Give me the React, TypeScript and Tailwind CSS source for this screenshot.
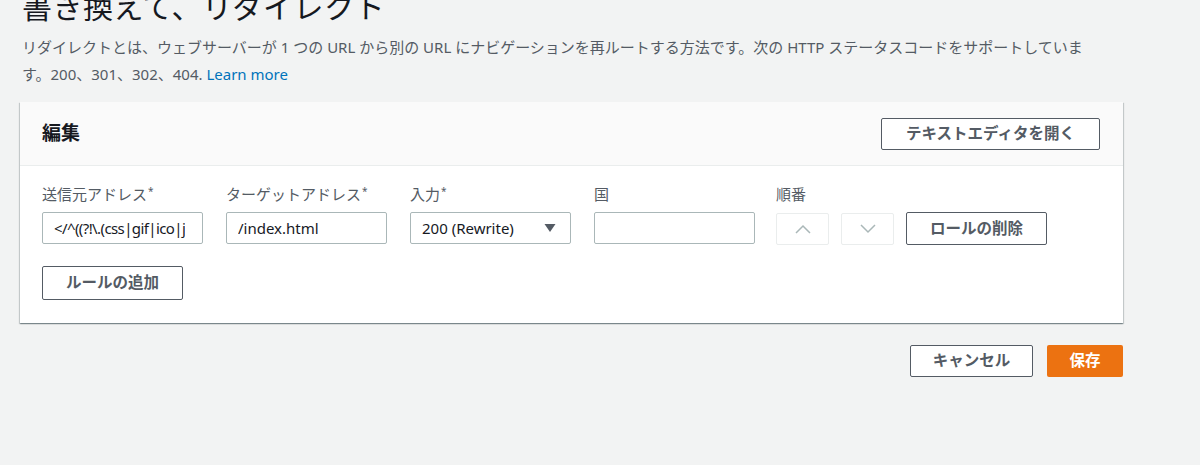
import React from "react";

const font = { fontFamily: '"Noto Sans", "Noto Sans CJK JP", sans-serif' };

function Label({ text, req }: { text: string; req?: boolean }) {
  return (
    <div className="h-[20px] text-[15px] leading-[20px] text-[#545b64] mb-[8px] whitespace-nowrap">
      {text}
      {req && <span className="text-[10px] align-top relative top-[-3px] ml-[1px]">*</span>}
    </div>
  );
}

function Input({ value, tight }: { value?: string; tight?: boolean }) {
  return (
    <div
      className={
        tight
          ? "w-[161px] h-[32px] border border-[#aab7b8] rounded-[2px] bg-white px-[11px] flex items-center text-[15px] tracking-[-0.6px] text-[#16191f] overflow-hidden whitespace-nowrap"
          : "w-[161px] h-[32px] border border-[#aab7b8] rounded-[2px] bg-white px-[11px] flex items-center text-[15px] text-[#16191f] overflow-hidden whitespace-nowrap"
      }
    >
      <span className="overflow-hidden">{value}</span>
    </div>
  );
}

export default function App() {
  return (
    <div className="min-h-[465px] w-[1200px] bg-[#f2f3f3] overflow-hidden" style={font}>
      <div className="pl-[22px]">
        <h1 className="text-[30px] leading-[36px] text-[#16191f] font-normal mt-[-11px] tracking-[0.5px]">
          書き換えて、リダイレクト
        </h1>
        <p className="mt-[9px] text-[15px] leading-[27px] text-[#545b64] whitespace-nowrap">
          リダイレクトとは、ウェブサーバーが 1 つの URL から別の URL にナビゲーションを再ルートする方法です。次の HTTP ステータスコードをサポートしていま
          <br />
          す。200、301、302、404. <span className="text-[#0073bb]">Learn more</span>
        </p>
      </div>

      <div className="ml-[20px] mt-[14px] w-[1103px] bg-white shadow-[0_1px_1px_0_rgba(0,28,36,0.3),1px_1px_1px_0_rgba(0,28,36,0.15),-1px_1px_1px_0_rgba(0,28,36,0.15)]">
        <div className="h-[64px] bg-[#fafafa] border-b border-[#eaeded] flex items-center justify-between pl-[22px] pr-[23px]">
          <div className="text-[19px] font-bold text-[#16191f]">編集</div>
          <button className="w-[219px] h-[32px] border border-[#545b64] rounded-[2px] bg-white text-[15.5px] font-bold text-[#545b64]">
            テキストエディタを開く
          </button>
        </div>
        <div className="pl-[22px] pt-[18px] pb-[23px]">
          <div className="flex">
            <div>
              <Label text="送信元アドレス" req />
              <Input value="</^((?!\.(css|gif|ico|j" tight />
            </div>
            <div className="ml-[23px]">
              <Label text="ターゲットアドレス" req />
              <Input value="/index.html" />
            </div>
            <div className="ml-[23px]">
              <Label text="入力" req />
              <div className="w-[161px] h-[32px] border border-[#aab7b8] rounded-[2px] bg-white pl-[11px] pr-[14px] flex items-center justify-between text-[15px] text-[#16191f]">
                <span>200 (Rewrite)</span>
                <svg width="12" height="10" viewBox="0 0 12 10">
                  <path d="M0.5 1 L11.5 1 L6 9 Z" fill="#545b64" />
                </svg>
              </div>
            </div>
            <div className="ml-[23px]">
              <Label text="国" />
              <Input />
            </div>
            <div className="ml-[21px]">
              <Label text="順番" />
              <div className="flex gap-[12px] items-center">
                <div className="w-[53px] h-[32px] border border-[#eaeded] rounded-[2px] flex items-center justify-center">
                  <svg width="16" height="10" viewBox="0 0 16 10">
                    <path d="M1 9 L8 2 L15 9" stroke="#aab7b8" strokeWidth="1.5" fill="none" />
                  </svg>
                </div>
                <div className="w-[53px] h-[32px] border border-[#eaeded] rounded-[2px] flex items-center justify-center">
                  <svg width="16" height="10" viewBox="0 0 16 10">
                    <path d="M1 1 L8 8 L15 1" stroke="#aab7b8" strokeWidth="1.5" fill="none" />
                  </svg>
                </div>
                <button className="w-[141px] h-[33px] border border-[#545b64] rounded-[2px] bg-white text-[15.5px] font-bold text-[#545b64]">
                  ロールの削除
                </button>
              </div>
            </div>
          </div>
          <button className="mt-[21px] w-[141px] h-[34px] border border-[#545b64] rounded-[2px] bg-white text-[15.5px] font-bold text-[#545b64]">
            ルールの追加
          </button>
        </div>
      </div>

      <div className="w-[1123px] flex justify-end gap-[14px] mt-[22px]">
        <button className="w-[123px] h-[32px] border border-[#545b64] rounded-[2px] bg-white text-[15.5px] font-bold text-[#545b64]">
          キャンセル
        </button>
        <button className="w-[76px] h-[32px] rounded-[2px] bg-[#ec7211] text-[15.5px] font-bold text-white">
          保存
        </button>
      </div>
    </div>
  );
}
